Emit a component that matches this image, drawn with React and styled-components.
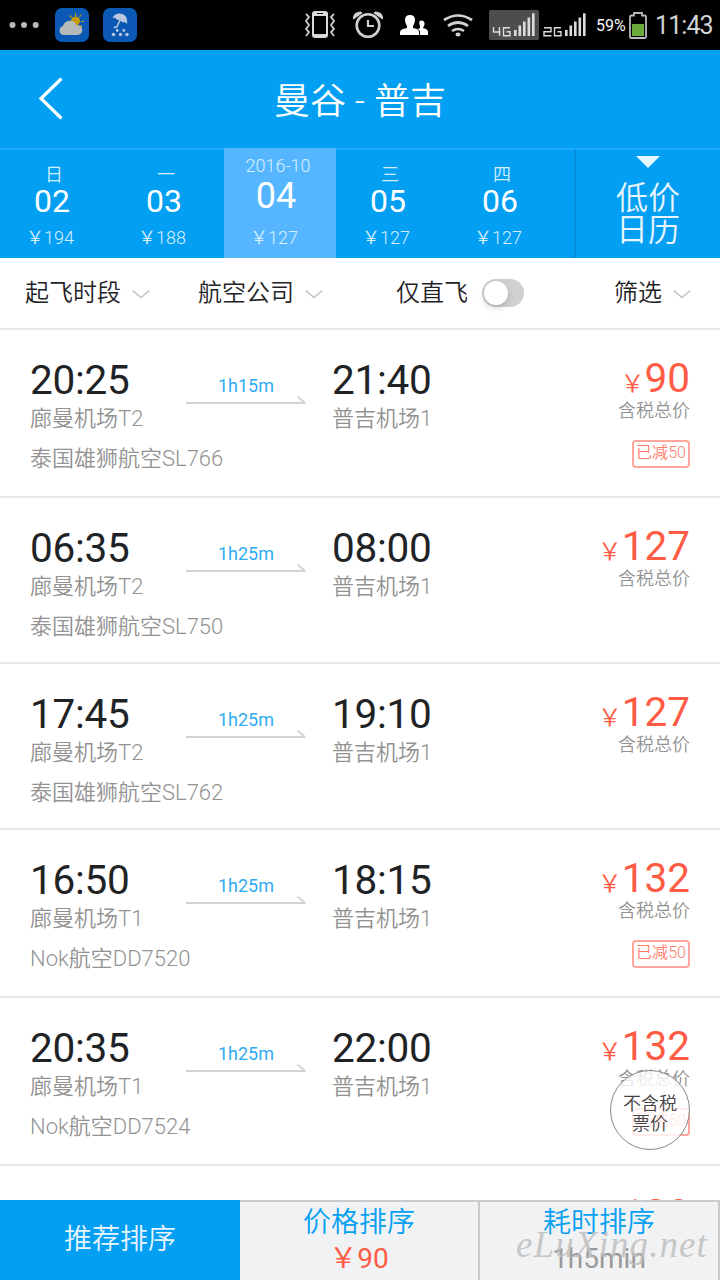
import React from "react";
import styled, { createGlobalStyle } from "styled-components";

const GlobalStyle = createGlobalStyle`
  * { box-sizing: border-box; }
  body {
    margin: 0;
    background: #fff;
    font-family: Roboto, "Noto Sans CJK SC", sans-serif;
  }
`;

const BLUE = "#039ff2";
const RED = "#ff5b45";

const Screen = styled.div`
  position: relative;
  display: flex;
  flex-direction: column;
  width: 720px;
  height: 1280px;
  overflow: hidden;
  background: #fff;
  color: #1f2326;
  white-space: nowrap;
`;

/* Status bar */
const StatusBar = styled.div`
  display: flex;
  flex: none;
  align-items: center;
  justify-content: space-between;
  height: 50px;
  padding: 0 7px 0 8px;
  background: #000;
  color: #d5d7d8;
  svg { display: block; flex: none; }
`;
const StatusGroup = styled.div`
  display: flex;
  align-items: center;
`;
const Gap = styled.span`
  flex: none;
  width: ${(p) => p.$w}px;
`;
const Battery = styled.span`
  font-size: 16px;
  width: 30px;
  color: #f6f6f6;
`;
const Clock = styled.span`
  padding-top: 2px;
  font-size: 25px;
  line-height: 48px;
  width: 58px;
  letter-spacing: -0.9px;
  color: #d0d2d3;
`;

/* Title bar */
const TitleBar = styled.header`
  position: relative;
  display: flex;
  flex: none;
  align-items: center;
  justify-content: center;
  height: 98px;
  padding-bottom: 2px;
  background: ${BLUE};
  color: #fff;
`;
const BackButton = styled.button`
  position: absolute;
  left: 36px;
  top: 24px;
  padding: 0;
  border: 0;
  background: none;
  svg { display: block; }
`;
const Title = styled.h1`
  margin: 0;
  font-size: 36px;
  font-weight: 350;
`;

/* Date strip */
const DateStrip = styled.div`
  display: flex;
  flex: none;
  height: 110px;
  background: ${BLUE};
`;
const DateCell = styled.div`
  display: flex;
  flex-direction: column;
  align-items: center;
  width: 112px;
  padding-top: ${(p) => (p.$active ? 8 : 15)}px;
  border-top: ${(p) => (p.$active ? 0 : "2px solid #1eacfb")};
  background: ${(p) => (p.$active ? "#55b6ff" : "transparent")};
`;
const Weekday = styled.div`
  padding-right: 4px;
  font-size: 18px;
  font-weight: 350;
  line-height: 20px;
  color: #d6efff;
`;
const DayNumber = styled.div`
  padding-right: 8px;
  height: ${(p) => (p.$active ? 50 : 41)}px;
  font-size: ${(p) => (p.$active ? 36 : 32)}px;
  line-height: ${(p) => (p.$active ? 40 : 32)}px;
  color: #fff;
`;
const DayPrice = styled.div`
  padding-right: 12px;
  font-size: 18px;
  font-weight: 350;
  line-height: 24px;
  color: #d6efff;
`;
const StripRest = styled.div`
  width: 14px;
  border-top: 2px solid #1eacfb;
`;
const CalendarButton = styled.div`
  display: flex;
  flex: 1;
  flex-direction: column;
  align-items: center;
  padding-top: 6px;
  border-top: 2px solid #1eacfb;
  border-left: 2px solid #0390dc;
  color: #e6f5ff;
  font-size: 32px;
  font-weight: 350;
  line-height: 32px;
  svg { display: block; margin-bottom: 14px; }
`;

/* Filters */
const FilterBar = styled.div`
  display: flex;
  flex: none;
  align-items: center;
  height: 72px;
  padding: 0 30px 6px 25px;
  border-bottom: 2px solid #e8e8e8;
  font-size: 24px;
  font-weight: 350;
`;
const Filter = styled.div`
  display: flex;
  align-items: center;
  gap: ${(p) => p.$gap || 11}px;
  margin-left: ${(p) => p.$left || 0}px;
  svg { display: block; margin-top: 8px; }
`;
const Toggle = styled.span`
  display: flex;
  width: 42px;
  height: 28px;
  margin-top: 6px;
  padding: 2px;
  border-radius: 14px;
  background: #cfd0d0;
`;
const Knob = styled.span`
  width: 24px;
  height: 24px;
  border-radius: 50%;
  background: #fff;
  box-shadow: 0 3px 6px rgba(0, 0, 0, 0.16);
`;

/* Flights */
const FlightList = styled.main`
  flex: 1;
  min-height: 0;
  overflow: hidden;
`;
const FlightRow = styled.article`
  display: grid;
  grid-template-columns: 156px 120px 26px 160px 1fr;
  align-items: start;
  height: ${(p) => (p.$tall ? 168 : 166)}px;
  padding: 27px 30px 0;
  border-bottom: 2px solid #e8e8e8;
`;
const Stop = styled.div`
  grid-column: ${(p) => p.$col};
`;
const Time = styled.div`
  font-size: 40.5px;
  line-height: 46px;
  letter-spacing: -0.3px;
`;
const Muted = styled.div`
  font-size: 22px;
  font-weight: 350;
  line-height: 32px;
  color: #929292;
`;
const Airline = styled(Muted)`
  margin-top: 8px;
`;
const Duration = styled.div`
  grid-column: 2;
  padding-top: 17px;
  text-align: center;
  font-size: 18px;
  line-height: 24px;
  color: #30acf3;
  svg { display: block; margin-top: -3px; }
`;
const PriceColumn = styled.div`
  grid-column: 5;
  display: flex;
  flex-direction: column;
  align-items: flex-end;
`;
const Price = styled.div`
  height: 42px;
  font-size: 40.5px;
  line-height: 42px;
  color: ${RED};
`;
const Yen = styled.span`
  font-size: 24px;
  font-weight: 350;
`;
const TaxNote = styled.div`
  padding-top: 1px;
  font-size: 18px;
  font-weight: 350;
  line-height: 22px;
  color: #929292;
`;
const Discount = styled.div`
  width: 58px;
  height: 28px;
  margin-top: 18px;
  border: 2px solid #ffa79c;
  border-radius: 4px;
  text-align: center;
  font-size: 16px;
  font-weight: 350;
  line-height: 22px;
  color: #ff7b6b;
`;

/* Floating tax switch */
const TaxSwitch = styled.button`
  position: absolute;
  right: 30px;
  bottom: 130px;
  width: 80px;
  height: 80px;
  padding: 8px 0 0;
  border: 1px solid #888;
  border-radius: 50%;
  background: rgba(255, 255, 255, 0.8);
  font-family: inherit;
  font-size: 18px;
  font-weight: 350;
  line-height: 20px;
  color: #444;
`;

/* Sort tabs */
const SortTabs = styled.nav`
  display: grid;
  flex: none;
  grid-template-columns: repeat(3, 240px);
  height: 80px;
`;
const SortTab = styled.div`
  display: flex;
  flex-direction: column;
  align-items: center;
  justify-content: center;
  border: solid #c9cacb;
  border-width: ${(p) => (p.$active ? 0 : "2px 2px 0 0")};
  background: ${(p) => (p.$active ? BLUE : "#f1f2f4")};
  color: ${(p) => (p.$active ? "#e6f5ff" : BLUE)};
  font-size: 28px;
  font-weight: 350;
  line-height: 36px;
`;
const SortValue = styled.span`
  font-weight: 400;
  color: ${(p) => p.$color};
`;
const Watermark = styled.div`
  position: absolute;
  right: 12px;
  bottom: 12px;
  font-family: "Liberation Serif", serif;
  font-style: italic;
  font-size: 37px;
  line-height: 46px;
  letter-spacing: 1.1px;
  color: rgba(190, 190, 190, 0.85);
`;

const WeatherIcon = () => (
  <svg width="34" height="34" viewBox="0 0 34 34">
    <rect width="34" height="34" rx="7" fill="#0b59b5" />
    <g stroke="#c09a10" strokeWidth="1.2">
      <path d="M20.5 5v3M26 6.500l-1.500 2.500M14.500 7.500l2 2M29 13.500h-3M27 19l-2-1.500" />
    </g>
    <circle cx="20.500" cy="13" r="4.500" fill="#c69a00" />
    <path d="M8.500 27a4.600 4.600 0 0 1-.5-9A7.200 7.200 0 0 1 21.500 17a5 5 0 0 1 1.500 10z" fill="#b5b9b7" />
  </svg>
);
const UmbrellaIcon = () => (
  <svg width="34" height="34" viewBox="0 0 34 34">
    <rect width="34" height="34" rx="7" fill="#0b59b5" />
    <path d="M9.500 10Q11.500 5.500 16.500 5.500q6.500.5 7.500 6l.2 4.500q-2.700-3-4.700-1.500-2.500-3.500-5.500-2.700-1.500-2.500-4.500-1.800z" fill="#bac8df" />
    <path d="M17.500 11l-3.300 7.300q-1.500 2-3.500.5" fill="none" stroke="#bac8df" strokeWidth="1.500" />
    <g fill="#bac8df">
      <circle cx="14.200" cy="22.500" r="1.400" /><circle cx="20.800" cy="22.500" r="1.400" />
      <circle cx="10.500" cy="26.500" r="1.700" /><circle cx="17.500" cy="26.500" r="1.700" /><circle cx="24" cy="26.500" r="1.700" />
    </g>
  </svg>
);
const DotsIcon = () => (
  <svg width="32" height="8" viewBox="0 0 32 8" fill="#b9b9b9">
    <circle cx="4.500" cy="4" r="3" /><circle cx="16" cy="4" r="3" /><circle cx="27.700" cy="4" r="3" />
  </svg>
);
const VibrateIcon = () => (
  <svg width="30" height="28" viewBox="0 0 30 28">
    <path fillRule="evenodd" fill="#d8dadb" d="M10 0h10q3 0 3 3v21q0 3-3 3H10q-3 0-3-3V3q0-3 3-3zM9 5v18h12V5zM12 2v1h6V2z" />
    <path d="M1 3l3 3-3 4 3 4-3 4 3 3-3 4M29 3l-3 3 3 4-3 4 3 4-3 3 3 4" fill="none" stroke="#c8cacb" strokeWidth="1.800" />
  </svg>
);
const AlarmIcon = () => (
  <svg width="30" height="28" viewBox="0 0 30 28">
    <circle cx="15" cy="14.500" r="11.300" fill="none" stroke="#cfd1d2" strokeWidth="2.600" />
    <path d="M15 9v6h6" fill="none" stroke="#cfd1d2" strokeWidth="2.200" />
    <path d="M.5 8Q0 1 8 1l1 1zM29.500 8Q30 1 22 1l-1 1z" fill="#cfd1d2" stroke="#cfd1d2" />
  </svg>
);
const PeopleIcon = () => (
  <svg width="28" height="22" viewBox="0 0 28 22" fill="#fff">
    <path d="M0 21v-3q0-2 3-3l4-1v-2Q5 9 5 6q0-5 5-5t5 5q0 3-2 6v2l4 1q2 1 2 3v3z" />
    <path d="M20 21v-4l-2-2 2-1v-2q-2-5 1-5.500 4 0 3.500 4L23 14q5 1 5 4v3z" />
  </svg>
);
const WifiIcon = () => (
  <svg width="30" height="23" viewBox="0 0 30 23" fill="none" stroke="#cfd1d2" strokeWidth="2.700">
    <path d="M1 6q14-9 28 0M5 12q10-7 20 0M9 17q6-4 12 0" />
    <ellipse cx="15" cy="20.500" rx="2.500" ry="2" fill="#cfd1d2" stroke="none" />
  </svg>
);
const SignalIcon = ({ four }) => (
  <svg width={four ? 50 : 44} height="30" viewBox={four ? "0 0 50 30" : "3 0 44 30"}>
    {four && <rect width="50" height="30" rx="1.500" fill="#4d4d4d" />}
    <g fill="none" stroke="#dcdcdc" strokeWidth="1.400">
      <path d={four ? "M4.500 17v5h7M10.500 17v9" : "M4 17.700h7v4H4v4h7.500"} />
      <path d="M21 17.700h-6.500v8h6.500v-4h-3.500" />
    </g>
    <g fill="#dcdcdc">
      <rect x="25" y="20" width="2.600" height="6" /><rect x="29.500" y="15.500" width="2.600" height="10.500" />
      <rect x="34" y="11.500" width="2.600" height="14.500" /><rect x="38.500" y="7.500" width="2.600" height="18.500" />
      <rect x="43" y="3.300" width="2.600" height="22.700" />
    </g>
  </svg>
);
const BatteryIcon = () => (
  <svg width="18" height="27" viewBox="0 0 18 27">
    <path d="M1 5q0-1.500 1.500-1.500H5V1h8v2.500h2.500Q17 3.500 17 5v19.500Q17 26 15.500 26h-13Q1 26 1 24.500z" fill="none" stroke="#b9babb" strokeWidth="1.800" />
    <rect x="3" y="12" width="12" height="12" fill="#6aaa3a" />
  </svg>
);
const Chevron = () => (
  <svg width="18" height="9" viewBox="0 0 18 9" fill="none" stroke="#c4c4c4" strokeWidth="1.500">
    <path d="M.7.700L9 7.500 17.300.7" />
  </svg>
);
const Arrow = () => (
  <svg width="120" height="9" viewBox="0 0 120 9" fill="none" stroke="#d3d3d3">
    <path d="M0 8h119.500" strokeWidth="2" />
    <path d="M111.500 1.500l7 6" strokeWidth="1.800" />
  </svg>
);

const days = [
  { label: "日", day: "02", price: 194 },
  { label: "一", day: "03", price: 188 },
  { label: "2016-10", day: "04", price: 127, active: true },
  { label: "三", day: "05", price: 127 },
  { label: "四", day: "06", price: 127 },
];

const flights = [
  { dep: "20:25", from: "廊曼机场T2", dur: "1h15m", arr: "21:40", to: "普吉机场1", airline: "泰国雄狮航空SL766", price: 90, off: 50 },
  { dep: "06:35", from: "廊曼机场T2", dur: "1h25m", arr: "08:00", to: "普吉机场1", airline: "泰国雄狮航空SL750", price: 127 },
  { dep: "17:45", from: "廊曼机场T2", dur: "1h25m", arr: "19:10", to: "普吉机场1", airline: "泰国雄狮航空SL762", price: 127 },
  { dep: "16:50", from: "廊曼机场T1", dur: "1h25m", arr: "18:15", to: "普吉机场1", airline: "Nok航空DD7520", price: 132, off: 50 },
  { dep: "20:35", from: "廊曼机场T1", dur: "1h25m", arr: "22:00", to: "普吉机场1", airline: "Nok航空DD7524", price: 132, off: 50 },
  { price: 138 },
];

function Flight({ f }) {
  return (
    <FlightRow $tall={Boolean(f.off)}>
      {f.dep && (
        <>
          <Stop $col="1">
            <Time>{f.dep}</Time>
            <Muted>{f.from}</Muted>
            <Airline>{f.airline}</Airline>
          </Stop>
          <Duration>
            {f.dur}
            <Arrow />
          </Duration>
          <Stop $col="4">
            <Time>{f.arr}</Time>
            <Muted>{f.to}</Muted>
          </Stop>
        </>
      )}
      <PriceColumn>
        <Price>{f.dep && <Yen>{"\uFFE5"}</Yen>}{f.price}</Price>
        {f.dep && <TaxNote>含税总价</TaxNote>}
        {f.off && <Discount>已减{f.off}</Discount>}
      </PriceColumn>
    </FlightRow>
  );
}

export default function App() {
  return (
    <Screen>
      <GlobalStyle />
      <StatusBar>
        <StatusGroup>
          <DotsIcon />
          <Gap $w={15} />
          <WeatherIcon />
          <Gap $w={14} />
          <UmbrellaIcon />
        </StatusGroup>
        <StatusGroup>
          <VibrateIcon />
          <Gap $w={18} />
          <AlarmIcon />
          <Gap $w={17} />
          <PeopleIcon />
          <Gap $w={15} />
          <WifiIcon />
          <Gap $w={16} />
          <SignalIcon four />
          <Gap $w={4} />
          <SignalIcon />
          <Gap $w={9} />
          <Battery>59%</Battery>
          <Gap $w={3} />
          <BatteryIcon />
          <Gap $w={8} />
          <Clock>11:43</Clock>
        </StatusGroup>
      </StatusBar>

      <TitleBar>
        <BackButton aria-label="返回">
          <svg width="30" height="48" viewBox="0 0 30 48" fill="none" stroke="#fff" strokeWidth="3.200" strokeLinecap="round">
            <path d="M24.500 5.500L5 24.500l19.500 19" />
          </svg>
        </BackButton>
        <Title>曼谷 - 普吉</Title>
      </TitleBar>

      <DateStrip>
        {days.map((d) => (
          <DateCell key={d.day} $active={d.active}>
            <Weekday>{d.label}</Weekday>
            <DayNumber $active={d.active}>{d.day}</DayNumber>
            <DayPrice>{"\uFFE5"}{d.price}</DayPrice>
          </DateCell>
        ))}
        <StripRest />
        <CalendarButton>
          <svg width="24" height="12" viewBox="0 0 24 12"><path d="M0 0h24L12 12z" fill="#e6f5ff" /></svg>
          <span>低价</span>
          <span>日历</span>
        </CalendarButton>
      </DateStrip>

      <FilterBar>
        <Filter>起飞时段<Chevron /></Filter>
        <Filter $left={48}>航空公司<Chevron /></Filter>
        <Filter $left={73} $gap={14}>仅直飞<Toggle><Knob /></Toggle></Filter>
        <Filter $left={90}>筛选<Chevron /></Filter>
      </FilterBar>

      <FlightList>
        {flights.map((f, i) => <Flight key={i} f={f} />)}
      </FlightList>

      <SortTabs>
        <SortTab $active>推荐排序</SortTab>
        <SortTab>价格排序<SortValue $color={RED}>{"\uFFE5"}90</SortValue></SortTab>
        <SortTab>耗时排序<SortValue $color="#999">1h5min</SortValue></SortTab>
      </SortTabs>

      <TaxSwitch>不含税<br />票价</TaxSwitch>
      <Watermark>eLuXing.net</Watermark>
    </Screen>
  );
}
